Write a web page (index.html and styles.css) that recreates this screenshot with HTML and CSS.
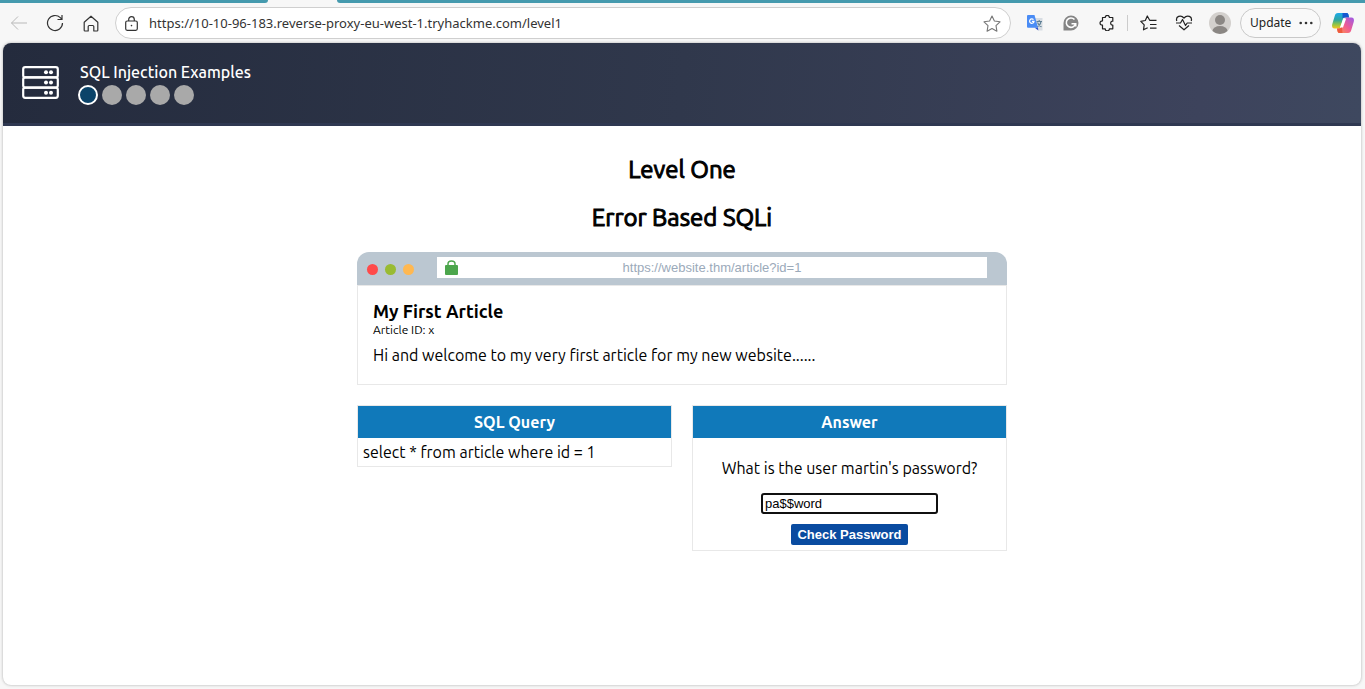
FILE: index.html
```html
<!DOCTYPE html>
<html lang="en">
<head>
<meta charset="utf-8">
<title>SQL Injection Examples</title>
<link rel="stylesheet" href="styles.css">
</head>
<body>
<div class="window">
  <div class="tabs"><span class="tabs-left"></span><span class="tabs-right"></span></div>
  <nav class="toolbar" aria-label="Browser">
    <button class="tool" aria-label="Back"><svg width="18" height="16" viewBox="0 0 18 16" fill="none" stroke="#b9b9b9"><path d="M17 8H1.500M8 1.500L1.500 8 8 14.500"/></svg></button>
    <button class="tool" aria-label="Reload"><svg width="18" height="18" viewBox="0 0 18 18" fill="none" stroke="#333" stroke-width="1.200"><path d="M16.500 9A7.500 7.500 0 1 1 14.300 3.700L16 5.400M16 1v4.500h-4.500"/></svg></button>
    <button class="tool" aria-label="Home"><svg width="16" height="17" viewBox="0 0 16 17" fill="none" stroke="#333" stroke-width="1.200" stroke-linejoin="round"><path d="M1.200 7.200L8 1.200l6.800 6v8a.8.8 0 0 1-.8.8h-3.200v-4.500a1 1 0 0 0-1-1H6.200a1 1 0 0 0-1 1V16H2a.8.8 0 0 1-.8-.8z"/></svg></button>
    <div class="address">
      <svg width="13" height="15" viewBox="0 0 13 15" fill="none" stroke="#333" stroke-width="1.200"><rect x=".7" y="5" width="11.600" height="9.300" rx="1.500"/><path d="M3.700 5V3.500a2.800 2.800 0 0 1 5.600 0V5"/><circle cx="6.500" cy="9.600" r=".8" fill="#333" stroke="none"/></svg>
      <input class="address-text" aria-label="Address" value="https://10-10-96-183.reverse-proxy-eu-west-1.tryhackme.com/level1">
      <button class="tool" aria-label="Add to favorites"><svg width="18" height="17" viewBox="0 0 18 17" fill="none" stroke="#777" stroke-width="1.100" stroke-linejoin="round"><path d="M9 1l2.400 5 5.600.8-4 3.900.9 5.500L9 13.600l-4.900 2.600.9-5.500-4-3.900L6.600 6z"/></svg></button>
    </div>
    <div class="extensions">
      <button class="tool" aria-label="Google Translate"><svg width="16" height="16" viewBox="0 0 16 16"><path d="M7 3h8.500v12.500H11z" fill="#d8dde3"/><path d="M9.500 6.500h5.500M12.200 5v1.500M14 6.500c-.4 2.600-2 4.500-4 5.500M10.500 7.500c.7 2 2.200 3.500 4 4.300" fill="none" stroke="#5f8095" stroke-width="1.100"/><path d="M1 0h6.500L11 12.700H1a1 1 0 0 1-1-1V1a1 1 0 0 1 1-1z" fill="#4a8cf5"/><path d="M7.800 12.700H11l.3 2.900z" fill="#3150c8"/><path d="M6.500 4.700A2.200 2.200 0 1 0 7 6.400H4.900" fill="none" stroke="#fff" stroke-width="1.200"/></svg></button>
      <button class="tool" aria-label="Grammarly"><svg width="16" height="16" viewBox="0 0 16 16"><path d="M8 .5a7.500 7.500 0 1 1 0 15H.5V8A7.500 7.500 0 0 1 8 .5z" fill="#858585"/><path d="M11.500 4.500A4.700 4.700 0 1 0 12.500 9M8.500 8.700h4.200v2.800" fill="none" stroke="#fff" stroke-width="1.600"/></svg></button>
      <button class="tool" aria-label="Extensions"><svg width="16" height="16" viewBox="0 0 16 16" fill="none" stroke="#222" stroke-width="1.200" stroke-linejoin="round"><path d="M3.500 2.500h2.700a2.100 2.100 0 0 1 4.200 0h3.400v3.700c-2.800-.4-2.800 4.400 0 4v3.600h-3.400a2.100 2.100 0 0 1-4.200 0H3.500v-3.600c-3.300 0-3.300-4.400 0-4.400z"/></svg></button>
      <span class="divider"></span>
      <button class="tool" aria-label="Favorites"><svg width="17" height="16" viewBox="0 0 17 16" fill="none" stroke="#222" stroke-width="1.200" stroke-linejoin="round"><path d="M12 5.300H9.700L7.300 1 5.300 5.500.8 6.300l3.400 3.500-.7 5L7.700 12.700M10.500 5.300H16.500M10 9.500h6.500M10 13.200h6.500"/></svg></button>
      <button class="tool" aria-label="Browser essentials"><svg width="18" height="16" viewBox="0 0 18 16" fill="none" stroke="#222" stroke-width="1.200" stroke-linejoin="round"><path d="M1.800 6C.3 1.500 5.800-.7 9 3c3.200-3.700 8.700-1.500 7.200 3M1 8h4.500L7.500 4.500l3 6L12.200 8H17M4 10.500l5 4.300 5-4.300"/></svg></button>
      <button class="tool" aria-label="Profile"><svg width="22" height="22" viewBox="0 0 22 22"><circle cx="11" cy="11" r="11" fill="#d3d0cd"/><circle cx="11" cy="8" r="5" fill="#8b8784"/><path d="M3.500 19a7.500 5 0 0 1 15 0A11 11 0 0 1 3.500 19z" fill="#8b8784"/></svg></button>
      <button class="update"><span>Update</span><svg width="14" height="4" viewBox="0 0 14 4" fill="#333"><circle cx="1.700" cy="2" r="1.300"/><circle cx="7" cy="2" r="1.300"/><circle cx="12.300" cy="2" r="1.300"/></svg></button>
      <button class="copilot" aria-label="Copilot"><svg width="22" height="20" viewBox="0 0 22 20">
        <defs>
          <linearGradient id="cool" x1="0" y1="0" x2="0" y2="1"><stop offset="0" stop-color="#1ba9ea"/><stop offset=".45" stop-color="#2fa5a0"/><stop offset=".72" stop-color="#8bc34a"/><stop offset="1" stop-color="#f7c51e"/></linearGradient>
          <linearGradient id="warm" x1="1" y1="0" x2="0" y2="1"><stop offset="0" stop-color="#9a5bea"/><stop offset=".5" stop-color="#ef5a93"/><stop offset="1" stop-color="#ff9b4a"/></linearGradient>
        </defs>
        <path d="M6 0h8.500c2 0 2 2 2.500 4.500h-4c-2 0-2 2-2.600 4L8.500 14c-.5 1-1 1.500-2.500 1.500H2.500C0 15.500-.3 13 .3 11L2.800 2.800C3.400 1 4 0 6 0z" fill="url(#cool)"/>
        <path d="M10.500 0h4c2 0 2 2 2.600 4.500H13L10.500 5z" fill="#1557cf"/>
        <path d="M16 20H7.500c-2 0-2-2-2.500-4.500h2c2 0 2.500-2 3-4L12.500 6c.5-1 1-1.500 2.500-1.500h4.500c2.500 0 2.800 2.500 2.200 4.500l-2.500 8.200C18.600 19 18 20 16 20z" fill="url(#warm)"/>
        <path d="M5 15.500h2c1.500 0 2.300-1 2.800-3L10.500 20h-3c-2 0-2-2-2.500-4.500z" fill="#ed5b3f"/>
        <path d="M11.200 5.500h3L11 14.500H8z" fill="#fff"/>
      </svg></button>
    </div>
  </nav>

  <div class="page">
    <header class="site-header">
      <svg class="logo" width="37" height="33" viewBox="0 0 37 33" fill="none" stroke="#fff" stroke-width="2.200"><rect x="1.200" y="1.200" width="34.600" height="10.200" rx="2"/><rect x="1.200" y="11.400" width="34.600" height="10.200" rx="2"/><rect x="1.200" y="21.600" width="34.600" height="10.200" rx="2"/><g fill="#fff" stroke="none"><circle cx="24" cy="6.300" r="2"/><circle cx="29" cy="6.300" r="2"/><circle cx="24" cy="16.500" r="2"/><circle cx="29" cy="16.500" r="2"/><circle cx="24" cy="26.700" r="2"/><circle cx="29" cy="26.700" r="2"/></g></svg>
      <div>
        <div class="site-title">SQL Injection Examples</div>
        <div class="levels"><span class="level current"></span><span class="level"></span><span class="level"></span><span class="level"></span><span class="level"></span></div>
      </div>
    </header>
    <main class="content">
      <h1 class="heading">Level One</h1>
      <h2 class="heading">Error Based SQLi</h2>

      <section class="mock">
        <div class="mock-bar">
          <div class="dots"><span class="dot red"></span><span class="dot green"></span><span class="dot amber"></span></div>
          <div class="mock-address">
            <svg width="13" height="15" viewBox="0 0 13 15"><path d="M3 6V4a3.500 3 0 0 1 7 0v2" fill="none" stroke="#4ca64c" stroke-width="1.500"/><path d="M1 5h11a1 1 0 0 1 1 1v8a1 1 0 0 1-1 1H1a1 1 0 0 1-1-1V6a1 1 0 0 1 1-1z" fill="#4ca64c"/></svg>
            <input class="mock-url" aria-label="Website address" value="https://website.thm/article?id=1">
          </div>
        </div>
        <article class="article">
          <h3 class="article-title">My First Article</h3>
          <div class="article-id">Article ID: x</div>
          <p class="article-text">Hi and welcome to my very first article for my new website......</p>
        </article>
      </section>

      <div class="panels">
        <section class="panel">
          <h3 class="panel-title">SQL Query</h3>
          <div class="query">select * from article where id = 1</div>
        </section>
        <section class="panel">
          <h3 class="panel-title">Answer</h3>
          <form class="answer">
            <label class="question" for="password">What is the user martin's password?</label>
            <input class="password" id="password" type="text" value="pa$$word">
            <button class="check" type="button">Check Password</button>
          </form>
        </section>
      </div>
    </main>
  </div>
</div>
</body>
</html>
```
FILE: styles.css
```css
* { box-sizing: border-box; }
body {
  margin: 0;
  background: #f7f7f7;
  color: #000;
  font: 16px/20px "Ubuntu", "Noto Sans", sans-serif;
}
button, input { font: inherit; margin: 0; }
h1, h2, h3, p { margin: 0; }
svg { display: block; flex: none; }

.window { display: flex; flex-direction: column; min-height: 100vh; }
.tabs { display: flex; justify-content: space-between; height: 3px; }
.tabs-left { width: 268px; background: #459aae; border-bottom-right-radius: 3px; }
.tabs-right { flex: 1; margin-left: 69px; background: #459aae; border-bottom-left-radius: 3px; }

.toolbar { display: flex; align-items: center; height: 40px; padding-left: 1px; }
.tool {
  display: flex; align-items: center; justify-content: center;
  width: 36px; height: 32px; padding: 0; border: 0; background: none;
}
.address {
  display: flex; align-items: center; flex: 1; min-width: 0; height: 32px;
  margin: 0 6px; padding-left: 9px;
  border: 1px solid #cfcfcf; border-radius: 16px; background: #fff;
}
.address-text {
  flex: 1; min-width: 0; margin-left: 11px; padding: 0; border: 0; background: none;
  color: #333; font: 13px/20px "Segoe UI", "Noto Sans", sans-serif;
}
.extensions { display: flex; align-items: center; }
.divider { width: 1px; height: 16px; margin: 0 2px; background: #ccc; }
.update {
  display: flex; align-items: center; justify-content: space-between;
  width: 81px; height: 30px; margin-left: 2px; padding: 0 7px 0 9px;
  border: 1px solid #c9c9c9; border-radius: 15px; background: #f9f9f9;
  color: #222; font: 12px/20px "Segoe UI", "Noto Sans", sans-serif;
}
.copilot {
  display: flex; align-items: center; justify-content: center;
  width: 44px; height: 32px; padding: 0; border: 0; background: none;
}

.page {
  flex: 1; margin: 0 4px 4px 3px; overflow: hidden;
  border-radius: 8px; background: #fff; box-shadow: 0 0 3px #aaa;
}
.site-header {
  display: flex; gap: 16px; padding: 18px 19px;
  border-bottom: 3px solid #2f3851;
  background: linear-gradient(95deg, #242b3d, #30384c 50%, #3d435c 88%, #3e485f);
  color: #fff;
}
.logo { margin-top: 5px; }
.site-title { padding: 0 5px; line-height: 22px; font-weight: 500; }
.levels { display: flex; gap: 4px; padding: 2px 0 0 3px; }
.level { width: 20px; height: 20px; border-radius: 50%; background: #a9a9a9; }
.current { border: 2px solid #fff; background: #0b4369; }

.content { max-width: 650px; margin: 0 auto; padding: 30px 0 20px; }
.heading {
  margin-bottom: 20px; font-size: 24px; line-height: 28px; font-weight: 400; text-align: center;
  -webkit-text-stroke: 1px currentColor;
}
.mock { border-radius: 12px 12px 0 0; overflow: hidden; }
.mock-bar {
  display: flex; align-items: center; gap: 23px; height: 33px; padding: 0 20px 0 10px; background: #bbc7d1;
}
.dots { display: flex; gap: 7px; padding-top: 2px; }
.dot { width: 11px; height: 11px; border-radius: 50%; }
.red { background: #ff4a4a; }
.green { background: #99bb32; }
.amber { background: #ffb851; }
.mock-address {
  display: flex; align-items: center; flex: 1; height: 21px; margin-bottom: 2px; padding: 0 8px; background: #fff;
}
.mock-url {
  flex: 1; min-width: 0; padding: 0 13px 0 0; border: 0; background: none;
  color: #9baaba; font: 13px/20px Arial, "Liberation Sans", sans-serif; text-align: center;
}
.article { padding: 14px 15px 18px; border: 1px solid #e8e8e8; }
.article-title { font-size: 18px; line-height: 22px; font-weight: 700; }
.article-id { font-size: 12px; line-height: 16px; }
.article-text { padding-top: 6px; line-height: 22px; }

.panels { display: grid; grid-template-columns: 1fr 1fr; align-items: start; gap: 20px; margin-top: 20px; }
.panel { border: 1px solid #e8e8e8; }
.panel-title {
  background: #1079ba; color: #fff; font-size: 16px; line-height: 32px; font-weight: 700; text-align: center;
}
.query { padding: 4px 5px; }
.answer { display: flex; flex-direction: column; align-items: center; gap: 10px; padding: 20px 5px 5px; }
.question { margin-bottom: 5px; }
.password {
  width: 177px; height: 21px; padding: 0 2px; border: 2px solid #101010; border-radius: 3px;
  background: #fff; color: #000; font: 13px/17px Arial, "Liberation Sans", sans-serif;
}
.check {
  height: 21px; padding: 0 6px; border: 0; border-radius: 2px; background: #094ba0; color: #fff;
  font: bold 13px/21px Arial, "Liberation Sans", sans-serif;
}
```
